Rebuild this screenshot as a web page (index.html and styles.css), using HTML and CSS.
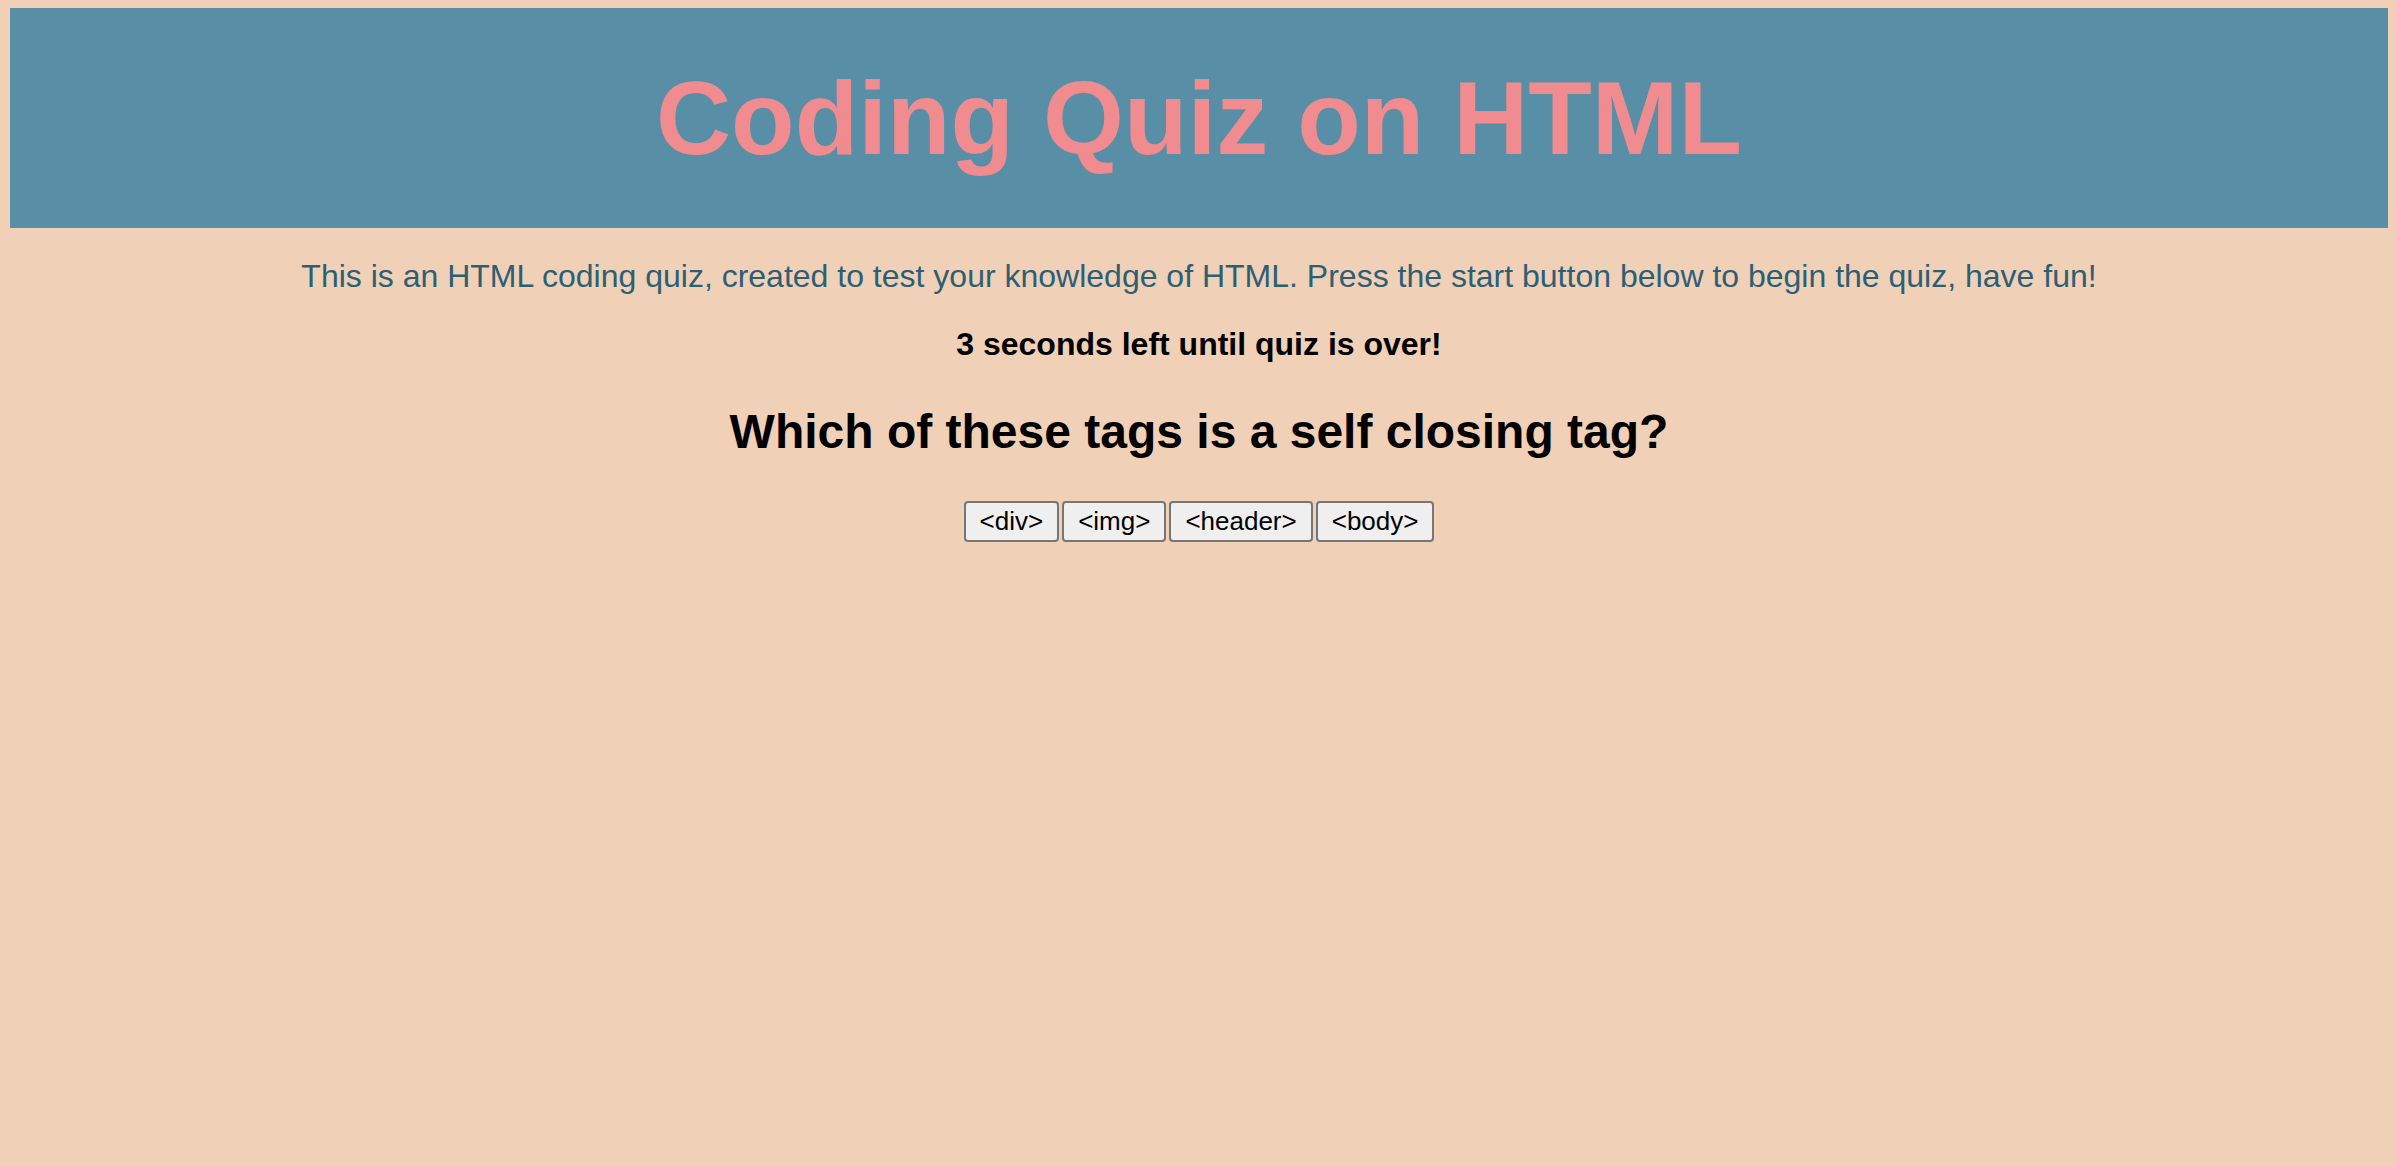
FILE: index.html
```html
<!DOCTYPE html>
<html lang="en">
<head>
<meta charset="utf-8">
<title>Coding Quiz on HTML</title>
<link rel="stylesheet" href="styles.css">
</head>
<body>
  <header class="banner">
    <h1 class="banner-title">Coding Quiz on HTML</h1>
  </header>
  <main class="quiz">
    <p class="intro">This is an HTML coding quiz, created to test your knowledge of HTML. Press the start button below to begin the quiz, have fun!</p>
    <p class="timer">3 seconds left until quiz is over!</p>
    <h2 class="question">Which of these tags is a self closing tag?</h2>
    <div class="answers">
      <button class="answer">&lt;div&gt;</button>
      <button class="answer">&lt;img&gt;</button>
      <button class="answer">&lt;header&gt;</button>
      <button class="answer">&lt;body&gt;</button>
    </div>
  </main>
</body>
</html>
```

FILE: styles.css
```css
html {
  background: #f0d0b6;
}

body {
  margin: 8px 8px 8px 10px;
  font-family: "Liberation Sans", Helvetica, Arial, sans-serif;
  background: #f0d0b6;
  min-height: 1150px;
}

.banner {
  background: #598fa6;
  padding: 50px 0;
  text-align: center;
}

.banner-title {
  margin: 0;
  font-size: 104px;
  line-height: 120px;
  font-weight: 700;
  color: #f08c8f;
}

.quiz {
  text-align: center;
}

.intro {
  margin: 30px 0 0;
  font-size: 32px;
  line-height: 37px;
  color: #2d5f74;
}

.timer {
  margin: 31px 0 0;
  font-size: 32px;
  line-height: 37px;
  font-weight: 700;
  color: #000;
}

.question {
  margin: 41px 0 0;
  font-size: 48px;
  line-height: 55px;
  font-weight: 700;
  color: #000;
}

.answers {
  margin-top: 42px;
  display: flex;
  justify-content: center;
  gap: 3px;
}

.answer {
  font-family: "Liberation Sans", Helvetica, Arial, sans-serif;
  font-size: 26px;
  line-height: 31px;
  padding: 3px 14px;
  border: 2px solid #767676;
  border-radius: 4px;
  background: #efefef;
  color: #000;
}
```
